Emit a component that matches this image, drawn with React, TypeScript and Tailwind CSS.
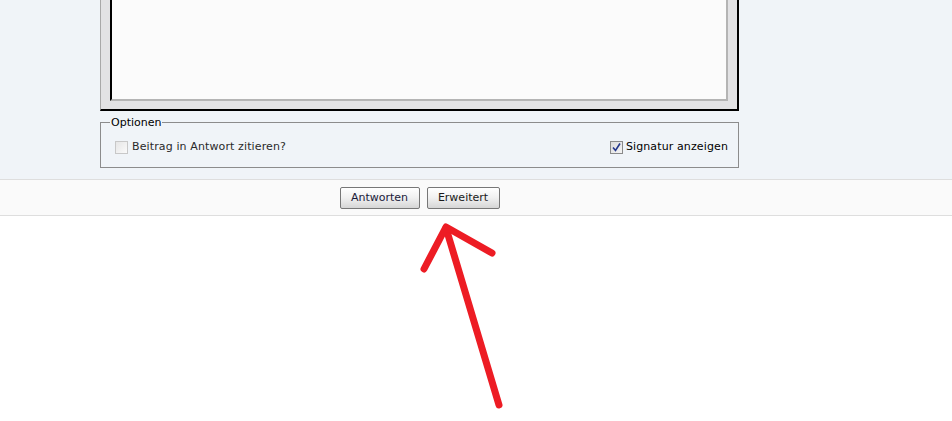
export default function App() {
  return (
    <div className="relative min-h-[421px] bg-white font-['DejaVu_Sans',sans-serif] text-[11px] tracking-[0.12px] text-black">
      <section className="bg-[#f0f4f8] pb-[11px]">
        <div className="ml-[100px] w-[639px]">
          <div className="h-[111px] border-l border-r-2 border-b-2 border-l-[#a8a8a8] border-r-black border-b-black bg-[#e2e2e4] px-[9px] pb-[8px]">
            <div className="h-full border-l-2 border-r-2 border-b-2 border-l-black border-r-[#b4b4b4] border-b-[#b4b4b4] bg-[#fbfbfb]" />
          </div>

          <fieldset className="mt-[5px] h-[52px] border border-[#8c8c8c] px-[14px] pt-[10px]">
            <legend className="-ml-[5px] px-[1px] leading-[13px] tracking-normal">Optionen</legend>
            <div className="flex items-center justify-between">
              <label className="flex items-center gap-[4px]">
                <span className="h-[13px] w-[13px] border border-[#c8c8c8] bg-gradient-to-br from-[#e6e6e6] to-[#fafafa]" />
                <span className="text-[#2a2a2a]">Beitrag in Antwort zitieren?</span>
              </label>
              <label className="-mr-[4px] flex items-center gap-[3px]">
                <span className="flex h-[13px] w-[13px] items-center justify-center border border-[#8a8a8a] bg-gradient-to-br from-[#dcdcdc] to-[#f4f4f4]">
                  <svg width="9" height="9" viewBox="0 0 9 9">
                    <path d="M1 4.5 L3.5 7.5 L8 0.5" fill="none" stroke="#24378c" strokeWidth="1.6" />
                  </svg>
                </span>
                <span>Signatur anzeigen</span>
              </label>
            </div>
          </fieldset>
        </div>
      </section>

      <footer className="h-[37px] border-t border-b border-[#dedede] bg-[#fafafa]">
        <div className="ml-[100px] flex w-[639px] justify-center gap-[7px] pt-[7px]">
          <button className="h-[22px] w-[80px] rounded-[2px] border border-[#777] bg-gradient-to-b from-white via-[#f0f0f0] to-[#d6d6d6] text-[11px] tracking-normal text-[#1a1a3a]">
            Antworten
          </button>
          <button className="h-[22px] w-[73px] rounded-[2px] border border-[#777] bg-gradient-to-b from-white via-[#f0f0f0] to-[#d6d6d6] text-[11px] tracking-normal text-[#1a1a1a]">
            Erweitert
          </button>
        </div>
      </footer>

      <svg className="pointer-events-none absolute left-0 top-0" width="952" height="421">
        <g fill="none" stroke="#ed1c24" strokeWidth="7" strokeLinecap="round" strokeLinejoin="round">
          <path d="M499 405 L446 228" />
          <path d="M424 269 L446 227 L492 253" />
        </g>
      </svg>
    </div>
  );
}
